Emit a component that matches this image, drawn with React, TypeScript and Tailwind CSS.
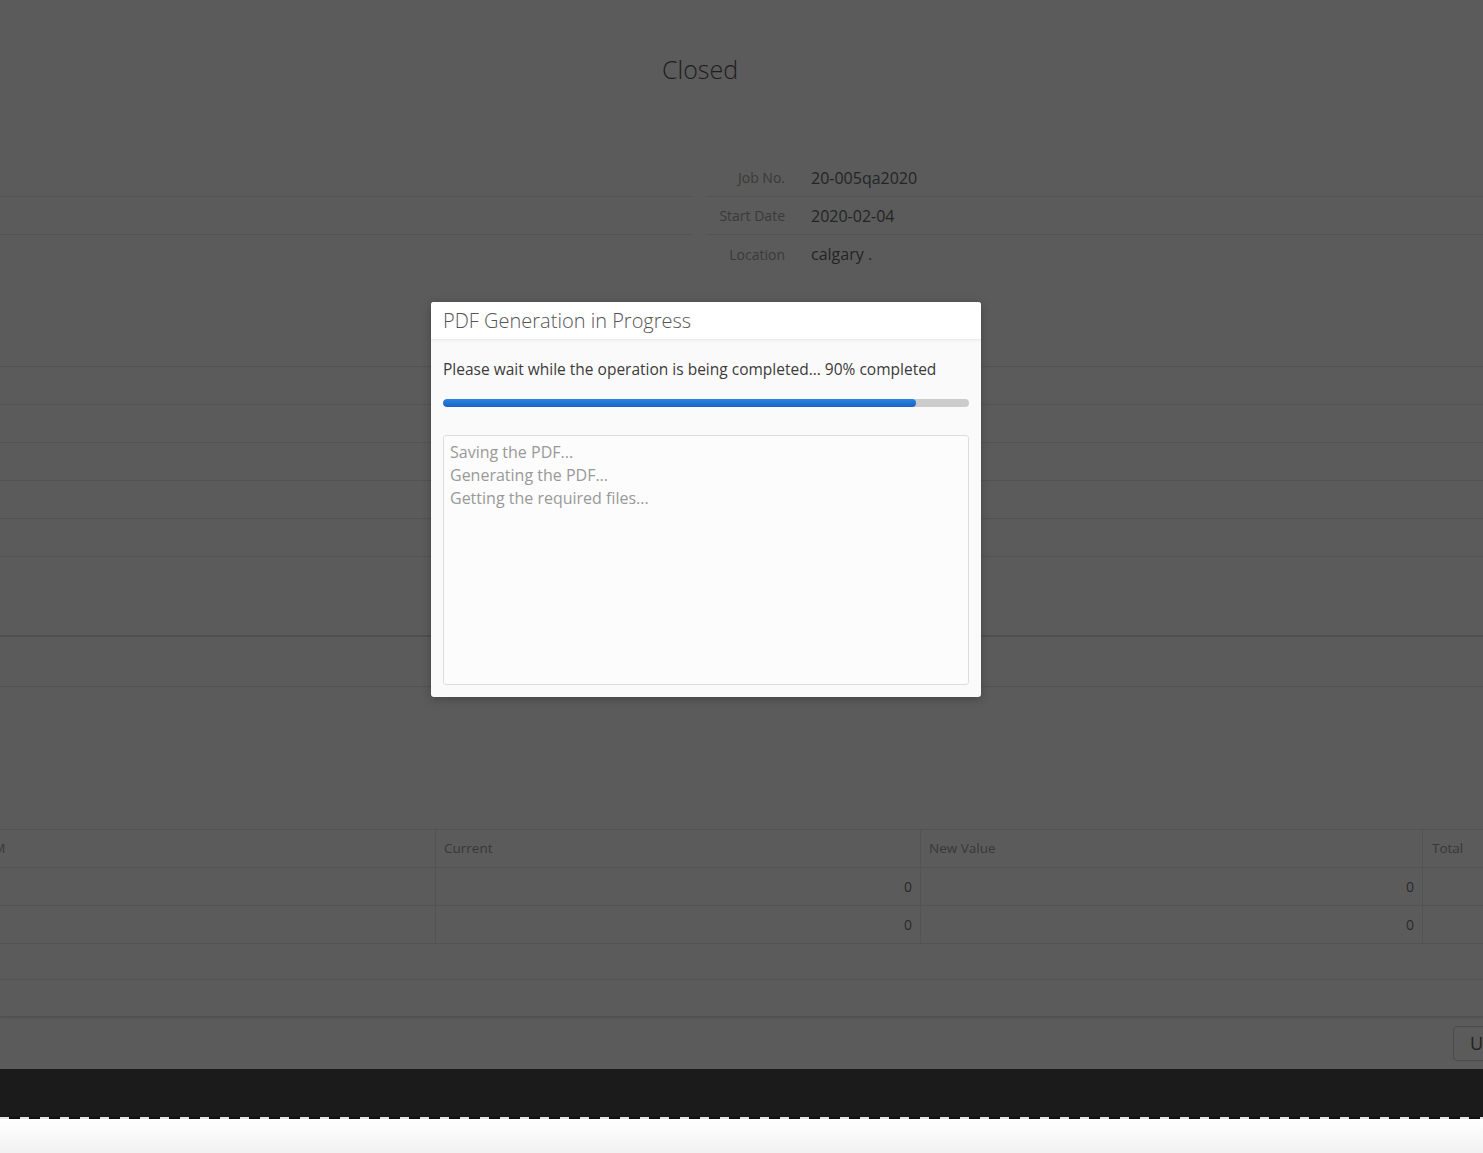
import React from "react";

const font = { fontFamily: '"Open Sans", "Noto Sans", sans-serif' };

function DetailRow({ label, value, border = true }: { label?: string; value?: string; border?: boolean }) {
  return (
    <div className="grid grid-cols-[693px_1fr] gap-x-[13px] h-[38px]">
      <div className={border ? "border-b border-[#535353]" : ""} />
      <div className={"flex items-center " + (border ? "border-b border-[#535353]" : "")}>
        <div className="w-[79px] text-right text-[14px] text-[#3a3a3a]">{label}</div>
        <div className="pl-[26px] text-[16px] text-[#242424]">{value}</div>
      </div>
    </div>
  );
}

function TableRow({ a, b, c, d, header = false }: { a?: string; b?: string; c?: string; d?: string; header?: boolean }) {
  const txt = header ? "text-[13.5px] text-[#383838]" : "text-[14px] text-[#2a2a2a]";
  return (
    <div className="grid grid-cols-[436px_485px_502px_1fr] h-[38px] border-b border-[#535353]">
      <div className={"flex items-center overflow-hidden border-r border-[#535353] " + txt}>
        <span className="ml-[-27px] whitespace-nowrap">{a}</span>
      </div>
      <div className={"flex items-center border-r border-[#535353] " + (header ? "pl-[8px] " : "justify-end pr-[8px] ") + txt}>{b}</div>
      <div className={"flex items-center border-r border-[#535353] " + (header ? "pl-[8px] " : "justify-end pr-[8px] ") + txt}>{c}</div>
      <div className={"flex items-center pl-[9px] whitespace-nowrap " + txt}>{d}</div>
    </div>
  );
}

export default function App() {
  return (
    <div className="relative w-full h-[1153px] overflow-hidden bg-[#5b5b5b]" style={font}>
      <div className="flex flex-col">
        {/* Title */}
        <div className="h-[159px] pt-[51px] pl-[662px]">
          <div className="text-[25px] leading-[36px] font-light text-[#1e1e1e] whitespace-nowrap">Closed</div>
        </div>

        {/* Details */}
        <DetailRow label="Job No." value="20-005qa2020" />
        <DetailRow label="Start Date" value="2020-02-04" />
        <DetailRow label="Location" value="calgary ." border={false} />
        <div className="h-[56px]" />
        <DetailRow />
        <DetailRow />
        <DetailRow />
        <DetailRow />
        <DetailRow />
        <DetailRow />

        <div className="h-[80px] border-b-2 border-[#505050]" />
        <div className="h-[50px] border-b border-[#535353]" />
        <div className="h-[143px] border-b border-[#535353]" />

        {/* Table */}
        <TableRow a="UOM" b="Current" c="New Value" d="Total" header />
        <TableRow b="0" c="0" />
        <TableRow b="0" c="0" />
        <div className="h-[36px] border-b border-[#535353]" />
        <div className="h-[37px] border-b border-[#505050] shadow-[0_1px_2px_rgba(0,0,0,0.12)]" />
        <div className="h-[52px] flex justify-end items-start pt-[9px]">
          <div className="mr-[-40px] w-[70px] h-[35px] rounded-[4px] border border-[#4a4a4a] flex items-center pl-[16px] text-[18px] text-[#222]">
            U
          </div>
        </div>

        {/* Footer */}
        <div className="h-[48px] bg-[#1b1b1b]" />
        <div className="h-[2px] bg-[repeating-linear-gradient(90deg,#e6e6e6_0px,#e6e6e6_9px,#111111_9px,#111111_20px)]" />
        <div className="h-[36px] bg-gradient-to-b from-[#ffffff] to-[#f1f1f1]" />
      </div>

      {/* Modal */}
      <div className="absolute left-[431px] top-[302px] w-[550px] h-[395px] rounded-[3px] bg-[#fafafa] shadow-[0_2px_10px_rgba(0,0,0,0.25)] flex flex-col overflow-hidden">
        <div className="h-[38px] bg-white border-b border-[#ececec] shadow-[0_1px_3px_rgba(0,0,0,0.05)] flex items-center pl-[12px]">
          <div className="text-[20px] font-light text-[#555555] whitespace-nowrap">PDF Generation in Progress</div>
        </div>
        <div className="flex flex-col px-[12px] pt-[18px] pb-[12px] flex-1">
          <div className="text-[15.5px] leading-[22px] text-[#3a3a3a] whitespace-nowrap">
            Please wait while the operation is being completed... 90% completed
          </div>
          <div className="mt-[19px] h-[8px] rounded-full bg-[#cccccc] overflow-hidden">
            <div className="h-full rounded-full bg-gradient-to-b from-[#2b84e0] to-[#1565c4]" style={{ width: "90%" }} />
          </div>
          <div className="mt-[28px] flex-1 rounded-[3px] border border-[#dddddd] bg-[#fcfcfc] pl-[6px] pt-[5px] text-[16px] leading-[23px] text-[#999999]">
            <div>Saving the PDF...</div>
            <div>Generating the PDF...</div>
            <div>Getting the required files...</div>
          </div>
        </div>
      </div>
    </div>
  );
}
